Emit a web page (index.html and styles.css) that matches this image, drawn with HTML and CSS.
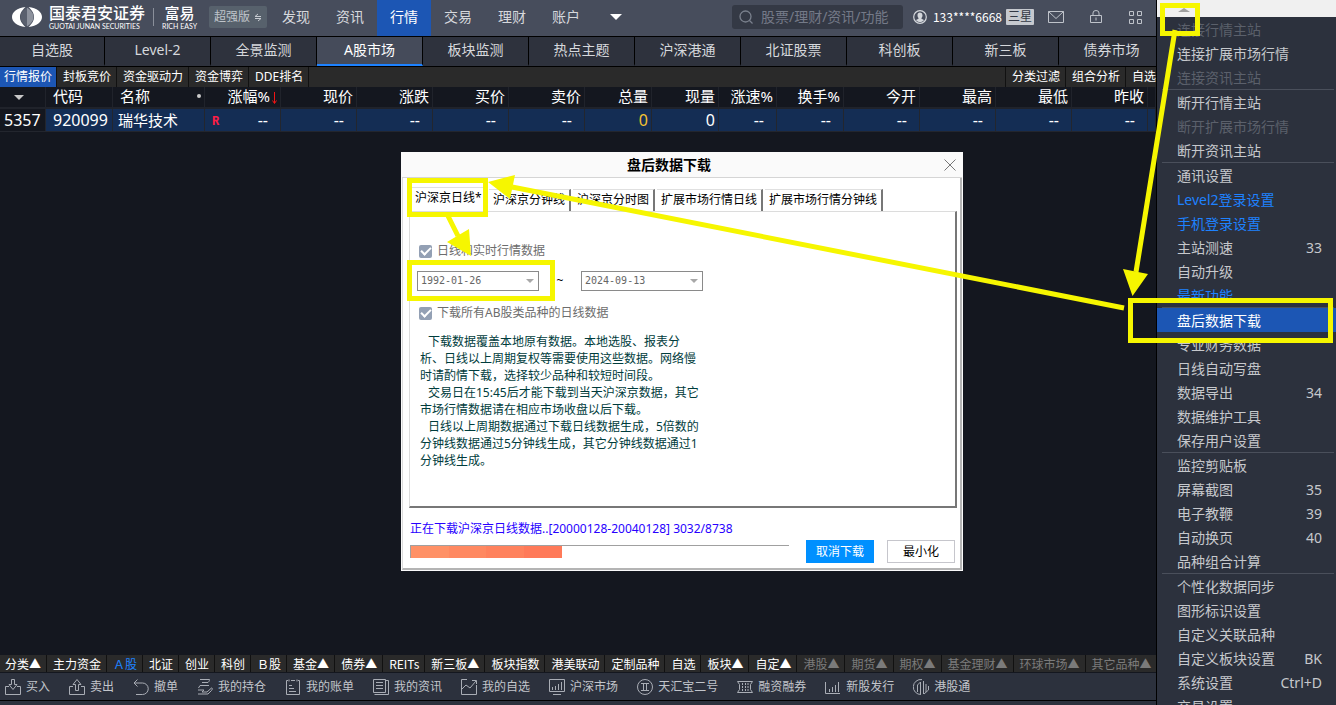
FILE: index.html
```html
<!DOCTYPE html>
<html lang="zh-CN">
<head>
<meta charset="utf-8">
<title>富易</title>
<link rel="stylesheet" href="styles.css">
</head>
<body>
<div class="app">
  <div class="main">
    <header class="topbar">
      <div class="logo">
        <svg class="logo-mark" viewBox="0 0 30 20" width="30" height="20">
          <path fill="#fff" d="M13.500 0C5 1 0 5 0 10s5 9 13.500 10C9 15.500 8 13 8 10s1-5.500 5.500-10z"/>
          <path fill="#fff" d="M16.500 0C25 1 30 5 30 10s-5 9-13.500 10C21 15.500 22 13 22 10s-1-5.500-5.500-10z"/>
          <path fill="#5a606e" d="M15 0.500C10 4 8.500 7 8.500 10s1.500 6 6.500 9.500z"/>
          <path fill="#8d929d" d="M15 0.500C20 4 21.500 7 21.500 10s-1.500 6-6.500 9.500z"/>
        </svg>
        <div class="brand"><span class="brand-cn">国泰君安证券</span><span class="brand-en">GUOTAI JUNAN SECURITIES</span></div>
        <span class="brand-rule"></span>
        <div class="brand easy"><span class="brand-cn">富易</span><span class="brand-en">RICH EASY</span></div>
      </div>
      <button class="edition">超强版
        <svg viewBox="0 0 8 10" width="8" height="10" fill="none" stroke="#c8ccd2"><path d="M1 4.500h6M1 4.500L4 2M7 6.500H1M7 6.500L4 9"/></svg>
      </button>
      <nav class="topnav">
        <button>发现</button><button>资讯</button><button class="on">行情</button><button>交易</button><button>理财</button><button>账户</button>
        <button class="more" aria-label="更多"><svg viewBox="0 0 12 6" width="12" height="6"><path fill="#fff" d="M0 0h12L6 6z"/></svg></button>
      </nav>
      <label class="search">
        <svg viewBox="0 0 14 14" width="14" height="14" fill="none" stroke="#7a808d" stroke-width="1.300"><circle cx="6.500" cy="6.500" r="5.500"/><path d="M10.500 10.500l3 3"/></svg>
        <input type="text" placeholder="股票/理财/资讯/功能" aria-label="搜索">
      </label>
      <div class="user">
        <svg viewBox="0 0 14 14" width="14" height="14"><circle cx="7" cy="7" r="6.300" fill="none" stroke="#d4d7dc" stroke-width="1.200"/><path fill="#d4d7dc" d="M4.500 5a2.500 2.500 0 015 0c0 1.500-.5 2.500-1 3v.8l2.500 1.200c-1 1.400-2.500 2-4 2s-3-.6-4-2l2.500-1.200V8c-.5-.5-1-1.500-1-3z"/></svg>
        <span class="uid">133****6668</span><span class="level">三星</span>
      </div>
      <div class="tools">
        <button aria-label="消息"><svg viewBox="0 0 16 12" width="16" height="12" fill="none" stroke="#bfc3ca"><path d="M.5.500h15v11H.5zM.5.500L8 7.500l7.500-7"/></svg></button>
        <button aria-label="锁定"><svg viewBox="0 0 12 14" width="12" height="14" fill="none" stroke="#bfc3ca"><path d="M.5 5.500h11v7H.5zM3 5.500V3a3 2.500 0 016 0v2.500M6 7.500v3"/></svg></button>
        <button aria-label="应用"><svg viewBox="0 0 14 14" width="14" height="14" fill="none" stroke="#bfc3ca"><path d="M1.500 1.500h4v4h-4zM9.500 1.500h4v4h-4zM1.500 9.500h4v4h-4zM9.500 9.500h4v4h-4z"/></svg></button>
      </div>
    </header>

    <nav class="markets">
      <button>自选股</button><button>Level-2</button><button>全景监测</button><button class="on">A股市场</button><button>板块监测</button><button>热点主题</button><button>沪深港通</button><button>北证股票</button><button>科创板</button><button>新三板</button><button>债券市场</button>
    </nav>

    <nav class="views">
      <button class="on">行情报价</button><button>封板竞价</button><button>资金驱动力</button><button>资金博弈</button><button>DDE排名</button>
      <div class="views-right"><button>分类过滤</button><button>组合分析</button><button class="cut">自选</button></div>
    </nav>

    <table class="quotes">
      <colgroup><col class="c46"><col class="c67"><col class="c92"><col class="c76"><col class="c76"><col class="c76"><col class="c76"><col class="c76"><col class="c67"><col class="c67"><col class="c58"><col class="c67"><col class="c76"><col class="c76"><col class="c76"><col class="c76"><col></colgroup>
      <thead><tr>
        <th class="mid"><svg viewBox="0 0 10 5" width="10" height="5"><path fill="#c8c8c8" d="M0 0h10L5 5z"/></svg></th>
        <th class="left">代码</th>
        <th class="left"><div class="name-head">名称<i class="dot"></i></div></th>
        <th>涨幅%<svg class="sort" viewBox="0 0 5 12" width="5" height="12"><path fill="none" stroke="#f01414" d="M2.500 0v11M.5 8.500l2 3 2-3"/></svg></th>
        <th>现价</th><th>涨跌</th><th>买价</th><th>卖价</th><th>总量</th><th>现量</th><th>涨速%</th><th>换手%</th><th>今开</th><th>最高</th><th>最低</th><th>昨收</th><th></th>
      </tr></thead>
      <tbody><tr>
        <td class="rownum">5357</td><td class="left">920099</td><td class="left name">瑞华技术</td>
        <td class="dash"><div class="flagged"><b>R</b>--</div></td>
        <td class="dash">--</td><td class="dash">--</td><td class="dash">--</td><td class="dash">--</td>
        <td class="gold">0</td><td>0</td>
        <td class="dash">--</td><td class="dash">--</td><td class="dash">--</td><td class="dash">--</td><td class="dash">--</td><td class="dash">--</td><td></td>
      </tr></tbody>
    </table>

    <div class="space"></div>

    <nav class="cats">
      <button>分类▲</button><button>主力资金</button><button class="on">Ａ股</button><button>北证</button><button>创业</button><button>科创</button><button>Ｂ股</button><button>基金▲</button><button>债券▲</button><button>REITs</button><button>新三板▲</button><button>板块指数</button><button>港美联动</button><button>定制品种</button><button>自选</button><button>板块▲</button><button>自定▲</button><button class="dim">港股▲</button><button class="dim">期货▲</button><button class="dim">期权▲</button><button class="dim">基金理财▲</button><button class="dim">环球市场▲</button><button class="dim">其它品种▲</button>
    </nav>

    <footer class="actions">
      <button><svg viewBox="0 0 16 16"><path d="M4 7.500H.5v8h15v-8H12M6.500.500h3v5H12l-4 5-4-5h2.500z"/></svg>买入</button>
      <button><svg viewBox="0 0 16 16"><path d="M4 7.500H.5v8h15v-8H12M6.500 11.500h3v-6H12L8 .5l-4 5h2.500z"/></svg>卖出</button>
      <button><svg viewBox="0 0 16 16"><path d="M4.500.500L1 4l3.500 3.500M1 4h8.500a5.700 5.700 0 010 11.500H3"/></svg>撤单</button>
      <button><svg viewBox="0 0 16 16"><path d="M3 .5h9.500M5 3.500h6M3 6.500h9M12.500.500c0 1.500-1 3-2 3M3 6.500L1.500 9M1 11h6l-2 2h5l4.500-4c1.500 0 .5 2 0 2.500L11 15H1"/></svg>我的持仓</button>
      <button><svg viewBox="0 0 16 16"><path d="M3 1.500H1.500v14h13v-14H13M4 .5v2M12 .5v2M6 1.500h4M4 6.500h3M4 9.500h5M4 12.500h7"/></svg>我的账单</button>
      <button><svg viewBox="0 0 16 16"><path d="M.5.500h12v13H.5zM12.500 1.500h3v14h-14M3 3.500h7M3 6.500h7M3 9.500h7"/></svg>我的资讯</button>
      <button><svg viewBox="0 0 16 16"><path d="M6 .5H.5v15h15V6M0 11l5-5 4 3 6-7M11 1.500h4.500V5"/></svg>我的自选</button>
      <button><svg viewBox="0 0 16 16"><path d="M.5.500h15v12H.5zM4 15.500h8M3.500 8v3M6.500 7v4M9.500 5v6M12.500 3v8"/></svg>沪深市场</button>
      <button><svg viewBox="0 0 16 16"><circle cx="8" cy="8" r="7.500"/><path d="M4 4.500h8M4 11.500h8M6.500 4.500v7M9.500 4.500v7"/></svg>天汇宝二号</button>
      <button><svg viewBox="0 0 16 16"><path d="M.5 2.500h15l-2 3v5l2 3H.5l2-3v-5z"/><path stroke-dasharray="2 1" d="M5.500 4v8M8.500 4v8M11 4v8"/></svg>融资融券</button>
      <button><svg viewBox="0 0 16 16"><path d="M.5 3v11.500H15M4.500 10v3M7.500 8v5M10.500 6v7M13.500 3v10"/></svg>新股发行</button>
      <button><svg viewBox="0 0 16 16"><path d="M9 .6A7.500 7.500 0 108 15.500M7.500 15V3l-3 3v7M10.500 2v13M13 5v8M15.500 7v4L11 15"/></svg>港股通</button>
    </footer>
    <div class="status"></div>
  </div>

  <aside class="menu">
    <button class="scroll-up" aria-label="向上滚动"><svg viewBox="0 0 12 4" width="12" height="4"><path fill="#a0a0a0" d="M0 4h12L6 0z"/></svg></button>
    <ul>
      <li><button disabled>连接行情主站</button></li>
      <li><button>连接扩展市场行情</button></li>
      <li><button disabled>连接资讯主站</button></li>
      <li class="rule"></li>
      <li><button>断开行情主站</button></li>
      <li><button disabled>断开扩展市场行情</button></li>
      <li><button>断开资讯主站</button></li>
      <li class="rule"></li>
      <li><button>通讯设置</button></li>
      <li><button class="blue">Level2登录设置</button></li>
      <li><button class="blue">手机登录设置</button></li>
      <li><button>主站测速<span>33</span></button></li>
      <li><button>自动升级</button></li>
      <li><button class="blue">最新功能</button></li>
      <li class="rule"></li>
      <li><button class="on">盘后数据下载</button></li>
      <li><button>专业财务数据</button></li>
      <li><button>日线自动写盘</button></li>
      <li><button>数据导出<span>34</span></button></li>
      <li><button>数据维护工具</button></li>
      <li><button>保存用户设置</button></li>
      <li class="rule"></li>
      <li><button>监控剪贴板</button></li>
      <li><button>屏幕截图<span>35</span></button></li>
      <li><button>电子教鞭<span>39</span></button></li>
      <li><button>自动换页<span>40</span></button></li>
      <li><button>品种组合计算</button></li>
      <li class="rule"></li>
      <li><button>个性化数据同步</button></li>
      <li><button>图形标识设置</button></li>
      <li><button>自定义关联品种</button></li>
      <li><button>自定义板块设置<span>BK</span></button></li>
      <li><button>系统设置<span>Ctrl+D</span></button></li>
      <li><button>交易设置</button></li>
    </ul>
  </aside>
</div>

<section class="dialog" role="dialog" aria-labelledby="dlg-title">
  <div class="dlg-head">
    <h1 id="dlg-title">盘后数据下载</h1>
    <button class="close" aria-label="关闭"><svg viewBox="0 0 12 12" width="12" height="12"><path stroke="#777" d="M.5.500l11 11M11.500.500l-11 11"/></svg></button>
  </div>
  <div class="dlg-body">
    <div class="dlg-tabs">
      <button class="on">沪深京日线*</button><button>沪深京分钟线</button><button>沪深京分时图</button><button>扩展市场行情日线</button><button>扩展市场行情分钟线</button>
    </div>
    <div class="panel">
      <label class="check"><input type="checkbox" checked disabled>日线和实时行情数据</label>
      <div class="dates">
        <span class="combo"><select disabled aria-label="开始日期"><option>1992-01-26</option></select></span>
        <span class="tilde">~</span>
        <span class="combo"><select disabled aria-label="结束日期"><option>2024-09-13</option></select></span>
      </div>
      <label class="check"><input type="checkbox" checked disabled>下载所有AB股类品种的日线数据</label>
      <div class="notes">
        <p>下载数据覆盖本地原有数据。本地选股、报表分<br>析、日线以上周期复权等需要使用这些数据。网络慢<br>时请酌情下载，选择较少品种和较短时间段。</p>
        <p>交易日在15:45后才能下载到当天沪深京数据，其它<br>市场行情数据请在相应市场收盘以后下载。</p>
        <p>日线以上周期数据通过下载日线数据生成，5倍数的<br>分钟线数据通过5分钟线生成，其它分钟线数据通过1<br>分钟线生成。</p>
      </div>
    </div>
    <div class="progress-text">正在下载沪深京日线数据..[20000128-20040128] 3032/8738</div>
    <div class="dlg-foot">
      <div class="bar" role="progressbar" aria-valuenow="40" aria-valuemin="0" aria-valuemax="100" aria-label="下载进度"><div class="fill" style="width:40%"></div></div>
      <button class="primary">取消下载</button>
      <button class="plain">最小化</button>
    </div>
  </div>
</section>

<svg class="marks" viewBox="0 0 1336 705" width="1336" height="705" fill="none" stroke="#f6f600" stroke-width="5" aria-hidden="true">
  <rect x="1162.500" y="5.500" width="35" height="28"/>
  <rect x="1130.500" y="300.500" width="200" height="40"/>
  <rect x="409.500" y="180.500" width="76" height="34"/>
  <rect x="409.500" y="262.500" width="143" height="36"/>
  <path d="M1175 30L1136 272M1124 308L512 187M448 216L458 236"/>
  <path fill="#f6f600" stroke="none" d="M1123 269l25 5-15.500 22zM488 182l27-7-5 24zM447 242l22-13 2 27z"/>
</svg>
</body>
</html>
```
FILE: styles.css
```css
* { box-sizing: border-box; }
body {
  margin: 0;
  overflow: hidden;
  background: #14171f;
  color: #d6d8dc;
  font-family: "Noto Sans", "Noto Sans CJK SC", sans-serif;
  font-size: 12px;
  line-height: 16px;
}
button, input, select { font: inherit; color: inherit; }
button { margin: 0; padding: 0; border: 0; background: none; white-space: nowrap; }
svg { display: block; flex: none; }
ul { list-style: none; margin: 0; padding: 0; }

.app { display: flex; height: 100vh; }
.main { flex: 1; min-width: 0; display: flex; flex-direction: column; overflow: hidden; }
.space { flex: 1; }

/* top bar */
.topbar {
  display: flex;
  align-items: center;
  height: 37px;
  padding: 0 14px 2px 12px;
  background: #474d5c;
  border-bottom: 1px solid #000;
}
.logo { display: flex; align-items: center; width: 197px; }
.brand { display: flex; flex-direction: column; margin-left: 7px; color: #fff; white-space: nowrap; }
.brand-cn { font-size: 16px; line-height: 18px; font-weight: 500; }
.easy .brand-cn { font-size: 15px; }
.brand-en { font-family: Lato, sans-serif; font-size: 7px; line-height: 8px; }
.easy { align-items: center; margin-left: 8px; }
.brand-rule { width: 1px; height: 18px; margin-left: 8px; background: #8a8f9a; }
.edition {
  display: flex;
  align-items: center;
  gap: 4px;
  height: 22px;
  padding: 0 5px;
  border-radius: 2px;
  background: #57616c;
  color: #c0c5cb;
}
.topnav { display: flex; align-self: stretch; margin: 0 auto 0 2px; font-size: 14px; }
.topnav button { width: 54px; height: 36px; padding-bottom: 2px; }
.topnav .on { background: #1c56b4; color: #fff; }
.topnav .more { display: grid; place-items: center; width: 46px; }
.search {
  display: flex;
  align-items: center;
  gap: 8px;
  width: 171px;
  height: 24px;
  padding: 0 7px;
  border-radius: 3px;
  background: #343945;
}
.search input { width: 100%; min-width: 0; padding: 0; border: 0; outline: 0; background: none; font-size: 14px; }
.search input::placeholder { color: #747a88; opacity: 1; }
.user { display: flex; align-items: center; margin-left: 10px; color: #fff; }
.uid { margin: 0 4px 0 6px; font-family: "Noto Sans CJK SC", sans-serif; }
.level { padding: 0 2px; border-radius: 1px; background: #c6c9cf; color: #333844; }
.tools { display: flex; align-items: center; gap: 26px; margin-left: 14px; }

/* market tabs */
.markets { display: flex; height: 30px; background: #2e323d; border-bottom: 1px solid #000; font-size: 14px; }
.markets button { flex: none; width: 106px; padding-bottom: 2px; border-right: 1px solid #000; border-bottom: 2px solid #2e323d; }
.markets button:first-child { width: 105px; }
.markets .on { background: #454b5a; border-bottom-color: #1e82ff; color: #fff; }

/* view tabs */
.views { display: flex; height: 20px; background: #2a2a2a; color: #fff; }
.views button { padding: 0 5px 0 6px; border-right: 1px solid #111; }
.views .on { padding: 0 4px; background: #1c56b4; }
.views-right { display: flex; margin-left: auto; border-left: 1px solid #111; }
.views-right .cut { padding-right: 0; border: 0; }

/* quotes table */
.quotes { width: 100%; table-layout: fixed; border-collapse: separate; border-spacing: 0; color: #fff; }
.c46 { width: 46px; } .c58 { width: 58px; } .c67 { width: 67px; } .c76 { width: 76px; } .c92 { width: 92px; }
.quotes th {
  height: 22px;
  padding: 0 3px 2px 7px;
  border-right: 1px solid #20232b;
  border-bottom: 2px solid #20232b;
  font-size: 15px;
  line-height: 18px;
  font-weight: 400;
  text-align: right;
  white-space: nowrap;
}
.quotes td {
  height: 23px;
  padding: 0 3px 0 7px;
  background: #142d54;
  border-right: 1px solid #23262e;
  border-bottom: 1px solid #23262e;
  font-size: 16px;
  line-height: 20px;
  text-align: right;
  white-space: nowrap;
}
.quotes .left { text-align: left; }
.quotes .mid { padding: 0 4px 0 14px; }
.quotes td.name { padding-left: 5px; font-size: 15px; }
.quotes td.dash { padding-right: 12px; }
.quotes .rownum { padding: 0 4px; background: #14171f; text-align: left; }
.quotes .gold { color: #f5c332; }
.name-head { display: flex; align-items: center; justify-content: space-between; }
.dot { width: 4px; height: 4px; border-radius: 2px; background: #ccc; }
.sort { display: inline-block; margin-left: 2px; vertical-align: -2px; }
.flagged { display: flex; justify-content: space-between; align-items: center; }
.flagged b { padding-top: 4px; color: #ff1e46; font: bold 12px "Liberation Mono", monospace; }

/* bottom bars */
.cats { display: flex; height: 18px; background: #2a2a2a; color: #fff; overflow: hidden; border-bottom: 1px solid #14171f; }
.cats button { flex: none; padding: 0 5px 0 6px; border-right: 1px solid #111; font-family: "Noto Sans CJK SC", sans-serif; }
.cats button:first-child { padding-left: 5px; }
.cats .on { color: #1e82ff; }
.cats .dim { color: #7b7b7b; }
.actions {
  display: flex;
  gap: 19px;
  height: 28px;
  padding: 0 5px 0 5px;
  background: #2c313d;
  border-bottom: 1px solid #000;
  color: #c2c5cb;
}
.actions button { display: flex; align-items: center; gap: 5px; padding-top: 1px; }
.actions svg { width: 16px; height: 16px; fill: none; stroke: #a9adb5; }
.status { height: 4px; background: #2c313d; }

/* drop-down menu */
.menu { width: 180px; border-left: 1px solid #000; background: #2c313d; overflow: hidden; font-size: 14px; }
.scroll-up { display: flex; justify-content: flex-start; align-items: center; width: 100%; height: 17px; padding: 3px 0 0 21px; background: #f0f0f0; }
.menu li button { display: flex; justify-content: space-between; align-items: center; width: 100%; height: 24px; padding: 1px 14px 0 20px; color: #c6c8cc; }
.menu li button:disabled { color: #5b606b; }
.menu li .blue { color: #1e82ff; }
.menu li .on { background: #1c56b4; color: #fff; }
.menu .rule { height: 1px; margin: 0 2px 0 5px; background: #4a4f5b; }

/* download dialog */
.dialog { position: absolute; left: 401px; top: 152px; width: 562px; background: #fff; color: #000; border: 1px solid #fafafa; border-top: 0; }
.dlg-head { display: grid; grid-template-columns: 1fr 18px; align-items: center; height: 26px; background: #fafafa; border-bottom: 1px solid #d5d5d5; }
.dlg-head h1 { margin: 0; padding-right: 8px; font-size: 14px; line-height: 20px; font-weight: 700; text-align: center; }
.close { display: block; width: 12px; }
.dlg-body { padding: 9px 3px 5px 6px; border: 1px solid #dcdcdc; border-right: 2px solid #b4b4b4; border-bottom: 2px solid #b4b4b4; border-top: 0; }
.dlg-tabs { display: flex; align-items: flex-end; gap: 2px; height: 24px; }
.dlg-tabs button { height: 22px; padding: 0 4px 2px; border-top: 1px solid #e0e0e0; border-right: 2px solid #777; }
.dlg-tabs .on { height: 24px; width: 78px; padding: 0 5px 4px 6px; background: #fff; }
.panel { padding: 31px 10px 37px 9px; border: 1px solid #dcdcdc; border-right: 2px solid #777; border-bottom: 2px solid #777; }
.check { display: flex; align-items: center; gap: 5px; height: 16px; color: #6d6d6d; }
.check input { display: grid; place-items: center; appearance: none; width: 13px; height: 13px; margin: 0; border-radius: 2px; background: #93a0b4; }
.check input::after { content: ""; width: 8px; height: 4px; margin-bottom: 2px; border: solid #fff; border-width: 0 0 2px 2px; transform: rotate(-45deg); }
.dates { display: flex; align-items: center; margin: 12px 0 14px -2px; }
.combo { display: flex; position: relative; width: 122px; height: 20px; }
.combo select { appearance: none; width: 100%; padding: 0 3px; border: 1px solid #8a8a8a; border-radius: 0; background: #fff; color: #666; opacity: 1; font-family: "DejaVu Sans Mono", monospace; font-size: 10px; }
.combo::after { content: ""; position: absolute; right: 5px; top: 8px; border: 4px solid transparent; border-top-color: #a8a8a8; border-bottom: 0; }
.tilde { width: 42px; text-align: center; }
.notes { margin: 12px 0 0 1px; color: #003c3c; line-height: 17px; white-space: nowrap; }
.notes p { margin: 0; text-indent: 8px; }
.progress-text { margin: 13px 0 3px 1px; color: #2800ff; }
.dlg-foot { display: flex; align-items: center; padding: 0 2px 0 1px; }
.bar { flex: 1; height: 13px; margin-right: 17px; border-top: 1px solid #a0a0a0; border-left: 1px solid #a0a0a0; }
.fill { height: 100%; background: linear-gradient(90deg, #ff9166 25%, #ff8961 25% 50%, #ff825d 50% 75%, #ff7a59 75%); }
.dlg-foot button { width: 68px; height: 23px; }
.primary { background: #0090ff; color: #fff; }
.plain { margin-left: 13px; border: 1px solid #c6c6cc; background: #fff; }

/* highlights drawn over the whole window */
.marks { position: absolute; left: 0; top: 0; pointer-events: none; }
```
